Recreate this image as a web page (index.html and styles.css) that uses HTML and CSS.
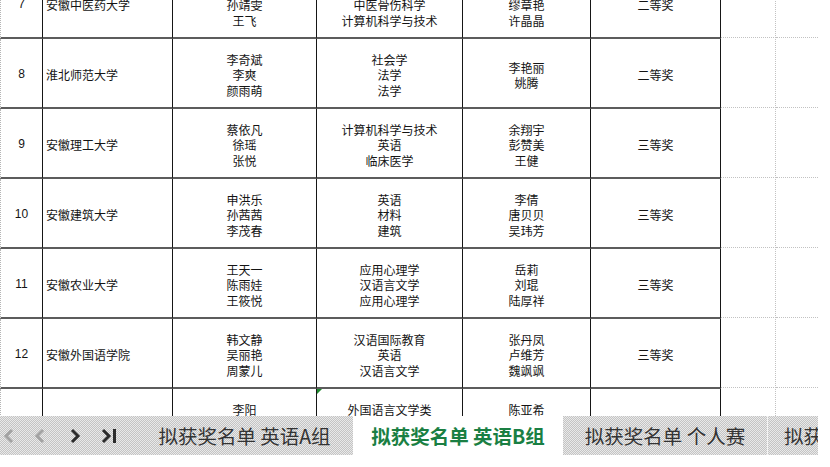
FILE: index.html
```html
<!DOCTYPE html>
<html lang="zh">
<head>
<meta charset="utf-8">
<title>拟获奖名单 英语B组</title>
<link rel="stylesheet" href="styles.css">
</head>
<body>
<div class="app">
  <div class="sheet">
    <div class="rows">
      <div class="row">
        <div class="c num">7</div>
        <div class="c uni">安徽中医药大学</div>
        <div class="c ctr"><span>王雨晴</span><span>孙靖雯</span><span>王飞</span></div>
        <div class="c ctr"><span>英语</span><span>中医骨伤科学</span><span>计算机科学与技术</span></div>
        <div class="c ctr"><span>王静</span><span>缪章艳</span><span>许晶晶</span></div>
        <div class="c ctr">二等奖</div>
        <div class="c empty"></div>
        <div class="c empty last"></div>
      </div>
      <div class="row">
        <div class="c num">8</div>
        <div class="c uni">淮北师范大学</div>
        <div class="c ctr"><span>李奇斌</span><span>李爽</span><span>颜雨萌</span></div>
        <div class="c ctr"><span>社会学</span><span>法学</span><span>法学</span></div>
        <div class="c ctr"><span>李艳丽</span><span>姚腾</span></div>
        <div class="c ctr">二等奖</div>
        <div class="c empty"></div>
        <div class="c empty last"></div>
      </div>
      <div class="row">
        <div class="c num">9</div>
        <div class="c uni">安徽理工大学</div>
        <div class="c ctr"><span>蔡依凡</span><span>徐瑶</span><span>张悦</span></div>
        <div class="c ctr"><span>计算机科学与技术</span><span>英语</span><span>临床医学</span></div>
        <div class="c ctr"><span>余翔宇</span><span>彭赞美</span><span>王健</span></div>
        <div class="c ctr">三等奖</div>
        <div class="c empty"></div>
        <div class="c empty last"></div>
      </div>
      <div class="row">
        <div class="c num">10</div>
        <div class="c uni">安徽建筑大学</div>
        <div class="c ctr"><span>申洪乐</span><span>孙茜茜</span><span>李茂春</span></div>
        <div class="c ctr"><span>英语</span><span>材料</span><span>建筑</span></div>
        <div class="c ctr"><span>李倩</span><span>唐贝贝</span><span>吴玮芳</span></div>
        <div class="c ctr">三等奖</div>
        <div class="c empty"></div>
        <div class="c empty last"></div>
      </div>
      <div class="row">
        <div class="c num">11</div>
        <div class="c uni">安徽农业大学</div>
        <div class="c ctr"><span>王天一</span><span>陈雨娃</span><span>王筱悦</span></div>
        <div class="c ctr"><span>应用心理学</span><span>汉语言文学</span><span>应用心理学</span></div>
        <div class="c ctr"><span>岳莉</span><span>刘琨</span><span>陆厚祥</span></div>
        <div class="c ctr">三等奖</div>
        <div class="c empty"></div>
        <div class="c empty last"></div>
      </div>
      <div class="row">
        <div class="c num">12</div>
        <div class="c uni">安徽外国语学院</div>
        <div class="c ctr"><span>韩文静</span><span>吴丽艳</span><span>周蒙儿</span></div>
        <div class="c ctr"><span>汉语国际教育</span><span>英语</span><span>汉语言文学</span></div>
        <div class="c ctr"><span>张丹凤</span><span>卢维芳</span><span>魏飒飒</span></div>
        <div class="c ctr">三等奖</div>
        <div class="c empty"></div>
        <div class="c empty last"></div>
      </div>
      <div class="row partial">
        <div class="c num"></div>
        <div class="c uni"></div>
        <div class="c ctr"><span>李阳</span></div>
        <div class="c ctr"><i class="flag"></i><span>外国语言文学类</span></div>
        <div class="c ctr"><span>陈亚希</span></div>
        <div class="c ctr"></div>
        <div class="c empty"></div>
        <div class="c empty last"></div>
      </div>
    </div>
  </div>
  <div class="tabbar">
    <div class="nav">
      <svg class="arrow" width="12" height="16" viewBox="0 0 12 16"><path d="M9 2 L3 8 L9 14" fill="none" stroke="#a3a3a3" stroke-width="3"/></svg>
      <svg class="arrow" width="12" height="16" viewBox="0 0 12 16"><path d="M9 2 L3 8 L9 14" fill="none" stroke="#a3a3a3" stroke-width="3"/></svg>
      <svg class="arrow" width="12" height="16" viewBox="0 0 12 16"><path d="M3 2 L9 8 L3 14" fill="none" stroke="#2b2b2b" stroke-width="3"/></svg>
      <svg class="arrow" width="18" height="16" viewBox="0 0 18 16"><path d="M3 2 L9 8 L3 14" fill="none" stroke="#2b2b2b" stroke-width="3"/><rect x="13" y="1" width="3" height="14" fill="#2b2b2b"/></svg>
    </div>
    <div class="tab t1">拟获奖名单 英语A组</div>
    <div class="tab t2 active">拟获奖名单 英语B组</div>
    <div class="tab t3">拟获奖名单 个人赛</div>
    <div class="sep"></div>
    <div class="tab t4">拟获奖名单 团体赛</div>
  </div>
</div>
</body>
</html>
```

FILE: styles.css
```css
html, body {
  margin: 0;
  padding: 0;
  background: #ffffff;
}
body {
  width: 830px;
  height: 467px;
  overflow: hidden;
  font-family: "Noto Sans CJK SC", "Noto Sans", sans-serif;
  color: #141414;
}
.app {
  display: flex;
  flex-direction: column;
  width: 830px;
  height: 467px;
}
.sheet {
  height: 416px;
  width: 818px;
  overflow: hidden;
  flex: none;
}
.rows {
  margin-top: -31px;
}
.row {
  display: grid;
  grid-template-columns: 43px 130px 144px 146px 128px 130px 55px 42px;
  height: 70px;
}
.c {
  box-sizing: border-box;
  border-bottom: 2px solid #5c5c5c;
  border-right: 1px solid #161616;
  display: flex;
  flex-direction: column;
  justify-content: center;
  align-items: center;
  padding-top: 4px;
  font-size: 12px;
  line-height: 15.5px;
  white-space: nowrap;
  position: relative;
}
.row.partial .c {
  justify-content: flex-start;
  padding-top: 13px;
}
.c.num {
  border-left: 1px dotted #b5b5b5;
  font-family: "Liberation Sans", Arial, sans-serif;
  font-size: 12px;
}
.c.uni {
  align-items: flex-start;
  padding-left: 3px;
}
.c.empty {
  border-bottom: 1px dotted #c2c2c2;
  border-right: 1px dotted #c2c2c2;
  margin-bottom: 1px;
}
.c.empty.last {
  border-right: none;
}
.flag {
  position: absolute;
  left: 0;
  top: 0;
  width: 0;
  height: 0;
  border-top: 5px solid #1f8a2e;
  border-right: 5px solid transparent;
}
.tabbar {
  display: flex;
  align-items: stretch;
  width: 818px;
  height: 39px;
  flex: none;
  background-color: #d6d6d6;
  background-image: repeating-conic-gradient(#c4c4c4 0 25%, #e9e9e9 0 50%);
  background-size: 2px 2px;
}
.nav {
  width: 136px;
  flex: none;
  display: flex;
  align-items: center;
  padding-left: 2px;
  box-sizing: border-box;
}
.nav .arrow:nth-child(1) { margin-left: 1px; }
.nav .arrow:nth-child(2) { margin-left: 19px; }
.nav .arrow:nth-child(3) { margin-left: 23px; }
.nav .arrow:nth-child(4) { margin-left: 19px; }
.tab {
  flex: none;
  display: flex;
  align-items: center;
  justify-content: center;
  font-size: 19.5px;
  color: #333333;
  white-space: nowrap;
  overflow: hidden;
  box-sizing: border-box;
  padding-bottom: 1px;
}
.t1 { width: 217px; }
.t2 { width: 210px; }
.t3 { width: 204px; }
.t4 {
  flex: 1;
  justify-content: flex-start;
  padding-left: 16px;
}
.tab.active {
  background: #ffffff;
  color: #1a7f43;
  font-weight: bold;
}
.sep {
  width: 1px;
  flex: none;
  background: #f4f4f4;
}
```
